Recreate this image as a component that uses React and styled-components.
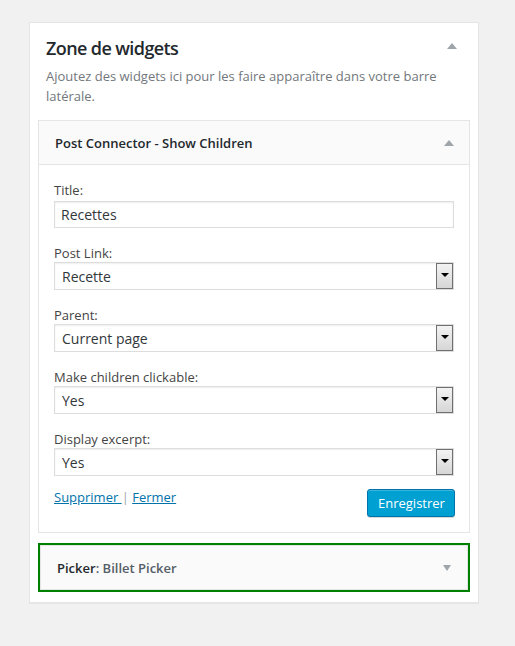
import React from 'react'
import styled, { createGlobalStyle } from 'styled-components'

const GlobalStyle = createGlobalStyle`
  body {
    margin: 0;
    background: #f1f1f1;
    font-family: 'Open Sans', 'Liberation Sans', sans-serif;
    color: #444;
  }
`

const Page = styled.div`
  padding: 22px 0 40px 29px;
`

const Panel = styled.div`
  box-sizing: border-box;
  width: 450px;
  background: #fff;
  border: 1px solid #e5e5e5;
  box-shadow: 0 1px 1px rgba(0, 0, 0, 0.04);
  padding: 0 8px 10px;
`

const PanelHeader = styled.div`
  padding: 13px 8px 0;
`

const TitleRow = styled.div`
  display: flex;
  align-items: center;
  justify-content: space-between;
`

const PanelTitle = styled.h2`
  margin: 0;
  font-size: 18px;
  line-height: 25px;
  font-weight: 600;
  letter-spacing: -0.6px;
  color: #23282d;
`

const Arrow = styled.span`
  width: 0;
  height: 0;
  border-left: ${p => p.$size || 5}px solid transparent;
  border-right: ${p => p.$size || 5}px solid transparent;
  ${p => (p.$down ? 'border-top' : 'border-bottom')}: 6px solid #a0a5aa;
  margin-right: ${p => p.$right || 0}px;
  margin-top: ${p => p.$top || 0}px;
`

const Description = styled.p`
  margin: 6px 0 14px;
  font-size: 13px;
  line-height: 19.5px;
  color: #72777c;
`

const Widget = styled.div`
  border: 1px solid #e5e5e5;
  background: #fff;
`

const GreenFrame = styled.div`
  margin-top: 10px;
  border: 2px solid #008000;
`

const WidgetTop = styled.div`
  display: flex;
  align-items: center;
  justify-content: space-between;
  height: 43px;
  padding: 0 15px 0 16px;
  background: #fafafa;
  border-bottom: ${p => (p.$open ? '1px solid #e5e5e5' : 'none')};
`

const WidgetTitle = styled.h3`
  margin: 0;
  font-size: 13px;
  font-weight: 600;
  color: #23282d;
  line-height: 18px;
`

const InTitle = styled.span`
  color: #555d66;
`

const WidgetBody = styled.div`
  padding: 16px 14px 15px 15px;
`

const Field = styled.div`
  margin-bottom: ${p => (p.$last ? 13 : 16)}px;
`

const Label = styled.label`
  display: block;
  font-size: 13px;
  line-height: 18px;
  color: #444;
`

const TextInput = styled.input`
  display: block;
  box-sizing: border-box;
  width: 400px;
  height: 27px;
  margin-top: 2px;
  padding: 0 6px;
  border: 1px solid #ddd;
  box-shadow: inset 0 1px 2px rgba(0, 0, 0, 0.07);
  font-family: inherit;
  font-size: 14px;
  color: #32373c;
  outline: none;
`

const SelectBox = styled.div`
  display: flex;
  align-items: center;
  box-sizing: border-box;
  width: 400px;
  height: 28px;
  border: 1px solid #ddd;
  box-shadow: inset 0 1px 2px rgba(0, 0, 0, 0.07);
  background: #fff;
`

const SelectValue = styled.span`
  flex: 1;
  padding-left: 7px;
  font-size: 14px;
  color: #32373c;
`

const SelectButton = styled.span`
  display: flex;
  align-items: center;
  justify-content: center;
  box-sizing: border-box;
  width: 17px;
  height: 26px;
  border: 1px solid #707070;
  background: linear-gradient(#f3f3f3, #d6d6d6);
  padding-bottom: 2px;
`

const BlackTriangle = styled.span`
  width: 0;
  height: 0;
  border-left: 4px solid transparent;
  border-right: 4px solid transparent;
  border-top: 4px solid #000;
`

const Footer = styled.div`
  display: flex;
  justify-content: space-between;
  align-items: flex-start;
`

const Links = styled.div`
  font-size: 13px;
  line-height: 17px;
  color: #a0a5aa;
`

const Link = styled.a`
  color: #0073aa;
  text-decoration: underline;
`

const SaveButton = styled.button`
  box-sizing: border-box;
  width: 88px;
  height: 28px;
  padding: 0 10px 1px;
  background: #00a0d2;
  border: 1px solid #0073aa;
  border-radius: 3px;
  box-shadow: inset 0 1px 0 rgba(120, 200, 230, 0.5), 0 1px 0 rgba(0, 0, 0, 0.15);
  color: #fff;
  font-family: inherit;
  font-size: 13px;
  cursor: pointer;
`

const selects = [
  { label: 'Post Link:', value: 'Recette' },
  { label: 'Parent:', value: 'Current page' },
  { label: 'Make children clickable:', value: 'Yes' },
  { label: 'Display excerpt:', value: 'Yes' },
]

function Select({ value }) {
  return (
    <SelectBox>
      <SelectValue>{value}</SelectValue>
      <SelectButton>
        <BlackTriangle />
      </SelectButton>
    </SelectBox>
  )
}

export default function App() {
  return (
    <Page>
      <GlobalStyle />
      <Panel>
        <PanelHeader>
          <TitleRow>
            <PanelTitle>Zone de widgets</PanelTitle>
            <Arrow $right={5} $top={-6} />
          </TitleRow>
          <Description>
            Ajoutez des widgets ici pour les faire apparaître dans votre barre latérale.
          </Description>
        </PanelHeader>

        <Widget>
          <WidgetTop $open>
            <WidgetTitle>Post Connector - Show Children</WidgetTitle>
            <Arrow />
          </WidgetTop>
          <WidgetBody>
            <Field>
              <Label>Title:</Label>
              <TextInput defaultValue="Recettes" />
            </Field>
            {selects.map((s, i) => (
              <Field key={s.label} $last={i === selects.length - 1}>
                <Label>{s.label}</Label>
                <Select value={s.value} />
              </Field>
            ))}
            <Footer>
              <Links>
                <Link href="#">Supprimer </Link> | <Link href="#">Fermer</Link>
              </Links>
              <SaveButton>Enregistrer</SaveButton>
            </Footer>
          </WidgetBody>
        </Widget>

        <GreenFrame>
          <Widget>
            <WidgetTop>
              <WidgetTitle>
                Picker<InTitle>: Billet Picker</InTitle>
              </WidgetTitle>
              <Arrow $down $size={4} $right={1} />
            </WidgetTop>
          </Widget>
        </GreenFrame>
      </Panel>
    </Page>
  )
}
